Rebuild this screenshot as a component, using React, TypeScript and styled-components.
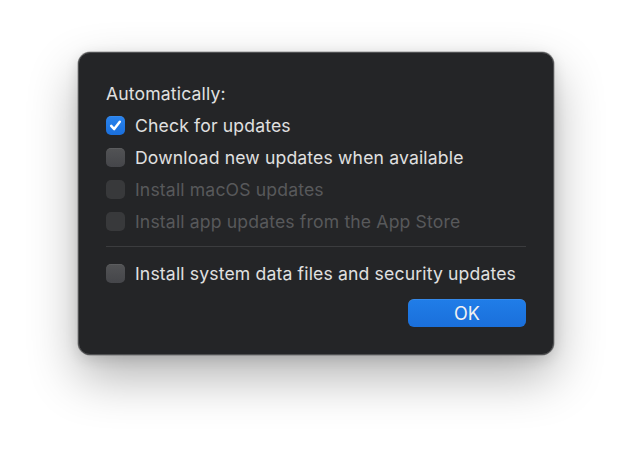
import React from "react";
import styled, { createGlobalStyle } from "styled-components";

const Global = createGlobalStyle`
  html, body { margin: 0; padding: 0; background: #ffffff; }
  * { box-sizing: border-box; }
`;

const Page = styled.div`
  width: 632px;
  height: 459px;
  padding: 52px 0 0 78px;
  background: #ffffff;
  font-family: Inter, "Noto Sans", "Liberation Sans", sans-serif;
`;

const Dialog = styled.div`
  width: 476px;
  height: 303px;
  border-radius: 12px;
  background: #242527;
  border: 1px solid #4f5052;
  box-shadow: 0 0 0 0.5px rgba(0, 0, 0, 0.35), 0 22px 50px rgba(0, 0, 0, 0.3),
    0 4px 14px rgba(0, 0, 0, 0.12);
  padding: 24px 27px 27px 27px;
  display: flex;
  flex-direction: column;
`;

const Heading = styled.div`
  height: 32px;
  display: flex;
  align-items: center;
  color: #e0e0e0;
  font-size: 17.6px;
  letter-spacing: 0.15px;
`;

const Row = styled.label<{ $disabled?: boolean }>`
  height: 32px;
  display: flex;
  align-items: center;
  gap: 10px;
  color: ${(p) => (p.$disabled ? "#58595b" : "#e0e0e0")};
  font-size: 17.6px;
  letter-spacing: 0.15px;
`;

const Box = styled.span<{ $checked?: boolean; $disabled?: boolean }>`
  width: 19px;
  height: 19px;
  border-radius: 5px;
  flex: none;
  display: flex;
  align-items: center;
  justify-content: center;
  background: ${(p) =>
    p.$checked
      ? "linear-gradient(#2a84ee, #1a6fdc)"
      : p.$disabled
      ? "#38393b"
      : "linear-gradient(#525355, #45464a)"};
  box-shadow: ${(p) =>
    p.$disabled ? "none" : "inset 0 0.5px 0 rgba(255,255,255,0.12)"};
`;

const Separator = styled.div`
  height: 1px;
  background: #3b3c3e;
  margin: 9px 0 10px;
`;

const Footer = styled.div`
  display: flex;
  justify-content: flex-end;
  margin-top: 10px;
`;

const Button = styled.button`
  width: 118px;
  height: 28px;
  border: none;
  border-radius: 6px;
  background: linear-gradient(#207de8, #1a6fdb);
  box-shadow: inset 0 0.5px 0 rgba(255, 255, 255, 0.2);
  color: #f2f2f2;
  font-family: inherit;
  font-size: 18px;
  padding: 0;
`;

const Check = () => (
  <svg width="15" height="15" viewBox="0 0 15 15">
    <path
      d="M3.2 7.9 L6.2 11.1 L11.8 3.8"
      fill="none"
      stroke="#ffffff"
      strokeWidth="2.5"
      strokeLinecap="round"
      strokeLinejoin="round"
    />
  </svg>
);

const items = [
  { label: "Check for updates", checked: true },
  { label: "Download new updates when available" },
  { label: "Install macOS updates", disabled: true },
  { label: "Install app updates from the App Store", disabled: true },
];

export default function App() {
  return (
    <Page>
      <Global />
      <Dialog>
        <Heading>Automatically:</Heading>
        {items.map((it) => (
          <Row key={it.label} $disabled={it.disabled}>
            <Box $checked={it.checked} $disabled={it.disabled}>
              {it.checked && <Check />}
            </Box>
            {it.label}
          </Row>
        ))}
        <Separator />
        <Row>
          <Box />
          Install system data files and security updates
        </Row>
        <Footer>
          <Button>OK</Button>
        </Footer>
      </Dialog>
    </Page>
  );
}
